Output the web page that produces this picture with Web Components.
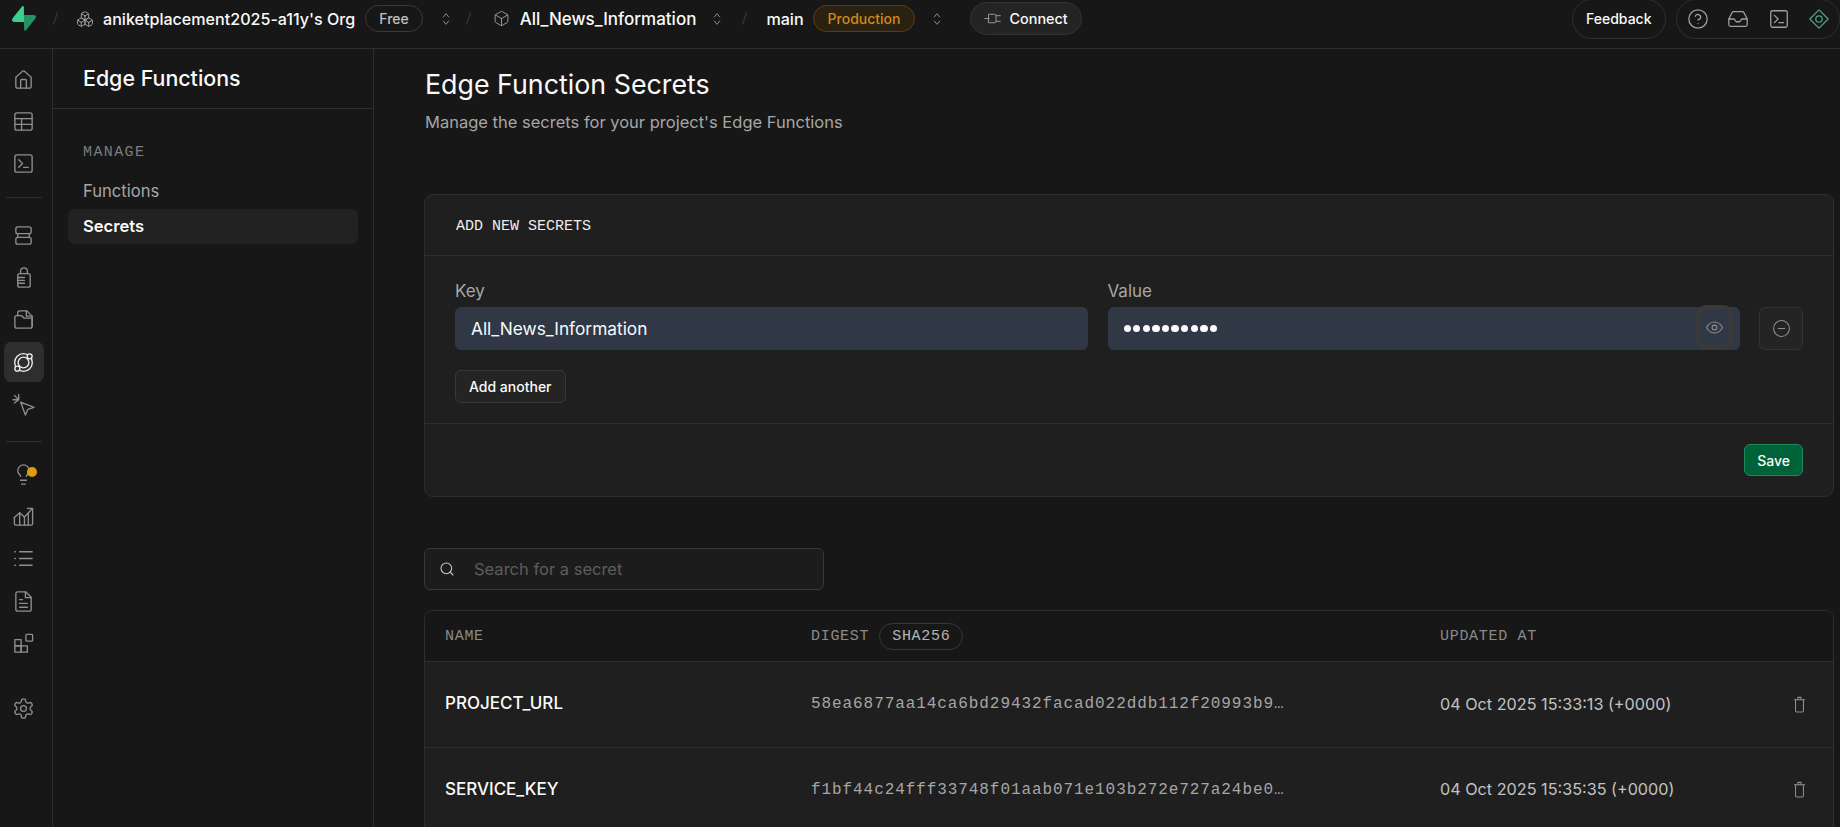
<!doctype html>
<html>
<head>
<meta charset="utf-8">
<title>Edge Function Secrets</title>
<style>
  html, body { margin: 0; height: 100%; background: #171717; overflow: hidden; }
  body { font-family: Inter, "Noto Sans", sans-serif; color: #fafafa; }
</style>
</head>
<body>
<app-shell>
  <app-topbar slot="top"></app-topbar>
  <app-rail slot="rail"></app-rail>
  <side-menu slot="menu" title="Edge Functions" group="MANAGE">
    <menu-link>Functions</menu-link>
    <menu-link active>Secrets</menu-link>
  </side-menu>
  <secrets-page slot="main"></secrets-page>
</app-shell>

<script>
const ICONS = {
  home: '<path d="M15 21v-8a1 1 0 0 0-1-1h-4a1 1 0 0 0-1 1v8"/><path d="M4 10.5a2 2 0 0 1 .7-1.5l6-5.4a2 2 0 0 1 2.6 0l6 5.4a2 2 0 0 1 .7 1.5V19a2 2 0 0 1-2 2H6a2 2 0 0 1-2-2z"/>',
  table: '<rect x="3" y="3" width="18" height="18" rx="2"/><path d="M3 9h18M3 15h18M10 9v12"/>',
  terminal: '<rect x="3" y="3" width="18" height="18" rx="2"/><path d="m7 8 4 4-4 4M12 16h5"/>',
  database: '<rect x="4" y="3" width="16" height="7" rx="2"/><rect x="4" y="14" width="16" height="7" rx="2"/><path d="M6 10v4M18 10v4"/>',
  auth: '<path d="M9 8V5.5a3.5 3.5 0 0 1 7 0V8"/><rect x="6" y="8" width="13" height="14" rx="2"/><path d="M6 12h7M6 15h7M6 18h7"/>',
  storage: '<path d="M6 8V5a2 2 0 0 1 2-2h7.5L21 8.5V19"/><path d="M15 3v5.5h6"/><path d="M3 10a2 2 0 0 1 2-2h5l2.5 2.5H21V19a2 2 0 0 1-2 2H5a2 2 0 0 1-2-2z"/>',
  functions: '<circle cx="12" cy="12" r="9.2"/><circle cx="12" cy="12" r="5.6"/><circle cx="18.4" cy="5.6" r="2.6" fill="#2e2e2e"/><circle cx="5.6" cy="18.4" r="2.6" fill="#2e2e2e"/>',
  realtime: '<path d="M9 9.5 23 15l-6.5 2-2.5 6z"/><path d="M7 1.5V7M1 7h6M2.5 2.5 7 7M7 7l-4.5 3.5"/>',
  bulb: '<path d="M15 14c.2-1 .7-1.7 1.5-2.5 1-.9 1.5-2.2 1.5-3.5A6 6 0 0 0 6 8c0 1 .2 2.2 1.5 3.5.7.7 1.3 1.5 1.5 2.5"/><path d="M9 18h6M10 22h4"/>',
  reports: '<path d="M2.5 13 8 8l5 4.5L21 4"/><path d="M16 3.5h5.5V9"/><path d="M2.5 13v6.5A1.5 1.5 0 0 0 4 21h16a1.5 1.5 0 0 0 1.5-1.5V9"/><path d="M8 8v13M13 12.5V21M17 8.5V21"/>',
  logs: '<path d="M8 5h13M8 12h13M8 19h13M3 5h.5M3 12h.5M3 19h.5"/>',
  file: '<path d="M14.5 2H6a2 2 0 0 0-2 2v16a2 2 0 0 0 2 2h12a2 2 0 0 0 2-2V7.5z"/><path d="M14 2v6h6M8 10h3M8 14h8M8 18h8"/>',
  extensions: '<rect x="3" y="8" width="6.5" height="6.5"/><rect x="3" y="14.5" width="6.5" height="6.5"/><rect x="9.5" y="14.5" width="6.5" height="6.5"/><rect x="14.5" y="2.5" width="7" height="7" rx="1"/>',
  settings: '<path d="M12.22 2h-.44a2 2 0 0 0-2 2v.18a2 2 0 0 1-1 1.73l-.43.25a2 2 0 0 1-2 0l-.15-.08a2 2 0 0 0-2.73.73l-.22.38a2 2 0 0 0 .73 2.73l.15.1a2 2 0 0 1 1 1.72v.51a2 2 0 0 1-1 1.74l-.15.09a2 2 0 0 0-.73 2.73l.22.38a2 2 0 0 0 2.73.73l.15-.08a2 2 0 0 1 2 0l.43.25a2 2 0 0 1 1 1.73V20a2 2 0 0 0 2 2h.44a2 2 0 0 0 2-2v-.18a2 2 0 0 1 1-1.73l.43-.25a2 2 0 0 1 2 0l.15.08a2 2 0 0 0 2.73-.73l.22-.39a2 2 0 0 0-.73-2.73l-.15-.08a2 2 0 0 1-1-1.74v-.5a2 2 0 0 1 1-1.74l.15-.09a2 2 0 0 0 .73-2.73l-.22-.38a2 2 0 0 0-2.73-.73l-.15.08a2 2 0 0 1-2 0l-.43-.25a2 2 0 0 1-1-1.73V4a2 2 0 0 0-2-2z"/><circle cx="12" cy="12" r="3"/>',
  help: '<circle cx="12" cy="12" r="10"/><path d="M9.1 9a3 3 0 0 1 5.8 1c0 2-3 3-3 3M12 17h.01"/>',
  inbox: '<path d="M22 12h-6l-2 3h-4l-2-3H2"/><path d="M5.45 5.11 2 12v6a2 2 0 0 0 2 2h16a2 2 0 0 0 2-2v-6l-3.45-6.89A2 2 0 0 0 16.76 4H7.24a2 2 0 0 0-1.79 1.11z"/>',
  advisor: '<path d="M12 2 22 12 12 22 2 12z"/><circle cx="12" cy="12" r="3.5"/>',
  eye: '<path d="M2 12s3.5-7 10-7 10 7 10 7-3.5 7-10 7-10-7-10-7z"/><circle cx="12" cy="12" r="3"/>',
  minus: '<circle cx="12" cy="12" r="10"/><path d="M8 12h8"/>',
  trash: '<path d="M5.5 6h13M10 6V3h4v3"/><path d="M7 6v14a1.5 1.5 0 0 0 1.5 1.5h7A1.5 1.5 0 0 0 17 20V6"/>',
  search: '<circle cx="11" cy="11" r="8"/><path d="m21 21-4.3-4.3"/>',
  updown: '<path d="m8 9 4-5 4 5M8 15l4 5 4-5"/>',
  box: '<path d="M21 8a2 2 0 0 0-1-1.73l-7-4a2 2 0 0 0-2 0l-7 4A2 2 0 0 0 3 8v8a2 2 0 0 0 1 1.73l7 4a2 2 0 0 0 2 0l7-4A2 2 0 0 0 21 16Z"/><path d="m3.3 7 8.7 5 8.7-5M12 22V12"/>',
  boxes: '<path d="M2.97 12.92A2 2 0 0 0 2 14.63v3.24a2 2 0 0 0 .97 1.71l3 1.8a2 2 0 0 0 2.06 0L12 19v-5.5l-5-3-4.03 2.42Z"/><path d="m7 16.5-4.74-2.85M7 16.5l5-3M7 16.5v5.17"/><path d="M12 13.5V19l3.97 2.38a2 2 0 0 0 2.06 0l3-1.8a2 2 0 0 0 .97-1.71v-3.24a2 2 0 0 0-.97-1.71L17 10.5l-5 3Z"/><path d="m17 16.5-5-3M17 16.5l4.74-2.85M17 16.5v5.17"/><path d="M7.97 4.42A2 2 0 0 0 7 6.13v4.37l5 3 5-3V6.13a2 2 0 0 0-.97-1.71l-3-1.8a2 2 0 0 0-2.06 0l-3 1.8Z"/><path d="M12 8 7.26 5.15M12 8l4.74-2.85M12 13.5V8"/>',
  plug: '<path d="M1 12h6M17 8h6M17 16h6"/><path d="M7 6h8a2 2 0 0 1 2 2v8a2 2 0 0 1-2 2H7z"/>'
}

// Stroke icon looked up by name, sized with the size attribute
class AppIcon extends HTMLElement {
  connectedCallback() {
    const size = this.getAttribute('size') || 20
    const weight = this.getAttribute('weight') || 1.5
    this.attachShadow({ mode: 'open' }).innerHTML = `
      <style>
        :host { display: inline-flex; flex: none; }
        svg { display: block; fill: none; stroke: currentColor; stroke-linecap: round; stroke-linejoin: round; }
      </style>
      <svg width="${size}" height="${size}" viewBox="0 0 24 24" stroke-width="${weight}">${ICONS[this.getAttribute('name')]}</svg>`
  }
}
customElements.define('app-icon', AppIcon)

class AppShell extends HTMLElement {
  constructor() {
    super()
    this.attachShadow({ mode: 'open' }).innerHTML = `
      <style>
        :host { display: flex; flex-direction: column; height: 100vh; overflow: hidden; }
        .below { flex: 1; display: flex; min-height: 0; }
        ::slotted([slot="main"]) { flex: 1; min-width: 0; }
      </style>
      <slot name="top"></slot>
      <div class="below">
        <slot name="rail"></slot>
        <slot name="menu"></slot>
        <slot name="main"></slot>
      </div>`
  }
}
customElements.define('app-shell', AppShell)

class StatusPill extends HTMLElement {
  constructor() {
    super()
    this.attachShadow({ mode: 'open' }).innerHTML = `
      <style>
        :host {
          display: inline-flex; align-items: center; height: 27px; box-sizing: border-box; padding: 0 13px;
          border: 1px solid #3a3a3a; border-radius: 14px; font-size: 14px; color: #c0c0c0;
        }
        :host([tone="warn"]) { border-color: #5c3d0e; background: #2b2110; color: #d08a18; padding: 0 14px; }
      </style>
      <slot></slot>`
  }
}
customElements.define('status-pill', StatusPill)

class AppTopbar extends HTMLElement {
  constructor() {
    super()
    this.attachShadow({ mode: 'open' }).innerHTML = `
      <style>
        :host {
          display: flex; align-items: center; height: 49px; flex: none; box-sizing: border-box;
          border-bottom: 1px solid #2e2e2e; padding: 0 0 11px 12px; font-size: 16.1px; font-weight: 500; color: #fafafa;
        }
        .slash { width: 1px; height: 13px; background: #3d3d3d; transform: rotate(18deg); flex: none; }
        app-icon { color: #a0a0a0; }
        .updown { color: #8a8a8a; }
        .project { font-size: 17px; }
        .connect {
          display: flex; align-items: center; gap: 8px; height: 33px; box-sizing: border-box; margin-left: 25px; padding: 0 13px;
          background: #242424; border: 1px solid #333; border-radius: 17px; font-size: 14.4px;
        }
        .feedback {
          display: flex; align-items: center; height: 40px; box-sizing: border-box; margin: 0 0 0 auto; padding: 0 13px;
          border: 1px solid #2e2e2e; border-radius: 20px; font-size: 14px;
        }
        .tools {
          display: flex; align-items: center; gap: 18.5px; height: 40px; box-sizing: border-box; margin: 0 0 0 10px; padding: 0 9px 0 10px;
          border: 1px solid #2e2e2e; border-radius: 20px;
        }
      </style>
      <svg width="24" height="25" viewBox="0 0 109 113">
        <path d="M63.7 110.3C60.8 113.9 55 111.9 55 107.3L54 40.1H99.2C107.4 40.1 112 49.5 106.9 55.9Z" fill="#249361"/>
        <path d="M45.3 2.1C48.2-1.5 54 .4 54 5L54.5 72.3H9.8C1.6 72.3-2.9 62.8 2.2 56.4Z" fill="#3ecf8e"/>
      </svg>
      <span class="slash" style="margin:0 20px 0 19px"></span>
      <app-icon name="boxes" size="18" weight="1.3"></app-icon>
      <span style="margin-left:9px">aniketplacement2025-a11y's Org</span>
      <status-pill style="margin-left:10px">Free</status-pill>
      <app-icon class="updown" name="updown" size="16" style="margin-left:15px"></app-icon>
      <span class="slash" style="margin:0 24px 0 14px"></span>
      <app-icon name="box" size="17" weight="1.3"></app-icon>
      <span class="project" style="margin-left:10px">All_News_Information</span>
      <app-icon class="updown" name="updown" size="16" style="margin-left:13px"></app-icon>
      <span class="slash" style="margin:0 21px 0 19px"></span>
      <span>main</span>
      <status-pill tone="warn" style="margin-left:9px">Production</status-pill>
      <app-icon class="updown" name="updown" size="16" style="margin-left:14px"></app-icon>
      <div class="connect"><app-icon name="plug" size="17" weight="1.3"></app-icon><span>Connect</span></div>
      <div class="feedback">Feedback</div>
      <div class="tools">
        <app-icon name="help" size="22" weight="1.4"></app-icon>
        <app-icon name="inbox" size="22" weight="1.4"></app-icon>
        <app-icon name="terminal" size="22" weight="1.4"></app-icon>
        <app-icon name="advisor" size="22" weight="1.4" style="color:#4fa17f"></app-icon>
      </div>`
  }
}
customElements.define('app-topbar', AppTopbar)

class RailItem extends HTMLElement {
  constructor() {
    super()
    const name = this.getAttribute('name')
    this.attachShadow({ mode: 'open' }).innerHTML = `
      <style>
        :host {
          display: flex; align-items: center; justify-content: center; position: relative;
          width: 40px; height: 40px; margin-bottom: 2.2px; border-radius: 7px; color: #8f8f8f;
        }
        :host([active]) { background: #2e2e2e; color: #ededed; }
        .dot { position: absolute; top: 12px; right: 7px; width: 10px; height: 10px; border-radius: 50%; background: #e09a10; }
      </style>
      <app-icon name="${name}" size="23" weight="1.4"></app-icon>
      ${this.hasAttribute('dot') ? '<span class="dot"></span>' : ''}`
  }
}
customElements.define('rail-item', RailItem)

class AppRail extends HTMLElement {
  constructor() {
    super()
    this.attachShadow({ mode: 'open' }).innerHTML = `
      <style>
        :host {
          display: flex; flex-direction: column; align-items: center; flex: none; width: 53px; box-sizing: border-box;
          padding: 10px 5px 0 0; border-right: 1px solid #2e2e2e;
        }
        hr { width: 36px; height: 1px; margin: 11px 0 13px; border: 0; background: #2e2e2e; }
      </style>
      <rail-item name="home"></rail-item>
      <rail-item name="table"></rail-item>
      <rail-item name="terminal"></rail-item>
      <hr style="margin-bottom:18px">
      <rail-item name="database"></rail-item>
      <rail-item name="auth"></rail-item>
      <rail-item name="storage"></rail-item>
      <rail-item name="functions" active></rail-item>
      <rail-item name="realtime"></rail-item>
      <hr style="margin-top:14px">
      <rail-item name="bulb" dot></rail-item>
      <rail-item name="reports"></rail-item>
      <rail-item name="logs"></rail-item>
      <rail-item name="file"></rail-item>
      <rail-item name="extensions" style="margin-bottom:25px"></rail-item>
      <rail-item name="settings"></rail-item>`
  }
}
customElements.define('app-rail', AppRail)

class MenuLink extends HTMLElement {
  constructor() {
    super()
    this.attachShadow({ mode: 'open' }).innerHTML = `
      <style>
        :host {
          display: flex; align-items: center; height: 35px; box-sizing: border-box; padding: 0 0 2px 15px; border-radius: 7px;
          font-size: 16.6px; color: #a6a6a6;
        }
        :host([active]) { background: #222; color: #fafafa; font-weight: 600; }
      </style>
      <slot></slot>`
  }
}
customElements.define('menu-link', MenuLink)

class SideMenu extends HTMLElement {
  constructor() {
    super()
    this.attachShadow({ mode: 'open' }).innerHTML = `
      <style>
        :host { display: block; flex: none; width: 321px; box-sizing: border-box; border-right: 1px solid #2e2e2e; }
        header {
          display: flex; align-items: center; height: 60px; padding: 0 0 2px 30px; box-sizing: border-box;
          border-bottom: 1px solid #2e2e2e; font-size: 21.4px; font-weight: 500;
        }
        .group {
          margin: 35px 0 12px 30px; font: 15px/18px "Liberation Mono", monospace; letter-spacing: 1.4px; color: #7d7d7d;
        }
        .links { padding: 0 15px; }
      </style>
      <header>${this.getAttribute('title')}</header>
      <div class="group">${this.getAttribute('group')}</div>
      <div class="links"><slot></slot></div>`
  }
}
customElements.define('side-menu', SideMenu)

class FieldBox extends HTMLElement {
  constructor() {
    super()
    this.attachShadow({ mode: 'open' }).innerHTML = `
      <style>
        :host { display: block; flex: 1; min-width: 0; }
        label { display: block; height: 29px; font-size: 17px; line-height: 27px; color: #a6a6a6; }
        .input {
          display: flex; align-items: center; position: relative; height: 43px; box-sizing: border-box; padding-left: 16px;
          background: #303846; border-radius: 6px; font-size: 17.3px; color: #fafafa;
        }
      </style>
      <label>${this.getAttribute('label')}</label>
      <div class="input"><slot></slot></div>`
  }
}
customElements.define('field-box', FieldBox)

class AddSecretsCard extends HTMLElement {
  constructor() {
    super()
    this.attachShadow({ mode: 'open' }).innerHTML = `
      <style>
        :host {
          display: block; box-sizing: border-box; background: #1f1f1f; border: 1px solid #2e2e2e; border-radius: 9px;
        }
        .head {
          display: flex; align-items: center; height: 60px; box-sizing: border-box; padding: 2px 30px 0 31px;
          font: 15px "Liberation Mono", monospace; color: #ededed;
        }
        .rule { height: 1px; background: #2e2e2e; }
        .body { height: 168px; box-sizing: border-box; padding: 22px 30px 0; border-bottom: 1px solid #2e2e2e; }
        .row { display: flex; gap: 20px; align-items: flex-end; }
        .dots { display: flex; gap: 2.2px; }
        .dots i { width: 7.4px; height: 7.4px; border-radius: 50%; background: #fafafa; }
        .eye {
          position: absolute; right: 7px; top: -2px; width: 37px; height: 44px; box-sizing: border-box;
          display: flex; align-items: center; justify-content: center; color: #8f8f8f;
          border: 4px solid #3a3a3a; border-radius: 10px; background: #303846;
        }
        .minus {
          flex: none; display: flex; align-items: center; justify-content: center; width: 44px; height: 43px; margin-left: -1px;
          box-sizing: border-box; background: #242424; border: 1px solid #333; border-radius: 6px; color: #8f8f8f;
        }
        .add {
          display: inline-flex; align-items: center; height: 33px; box-sizing: border-box; margin-top: 20px; padding: 0 13px;
          background: #242424; border: 1px solid #383838; border-radius: 6px; font-size: 14px; font-weight: 500;
        }
        .foot { display: flex; justify-content: flex-end; align-items: center; height: 72px; padding: 0 30px; box-sizing: border-box; }
        .save {
          display: flex; align-items: center; height: 32px; box-sizing: border-box; padding: 0 12px;
          background: #006239; border: 1px solid #1f8a5c; border-radius: 6px; font-size: 14px; font-weight: 500;
        }
      </style>
      <div class="head">ADD NEW SECRETS</div>
      <div class="rule"></div>
      <div class="body">
        <div class="row">
          <field-box label="Key">All_News_Information</field-box>
          <field-box label="Value">
            <span class="dots" aria-label="hidden value">${'<i></i>'.repeat(10)}</span>
            <span class="eye"><app-icon name="eye" size="19" weight="1.3"></app-icon></span>
          </field-box>
          <div class="minus"><app-icon name="minus" size="19" weight="1.3"></app-icon></div>
        </div>
        <div class="add">Add another</div>
      </div>
      <div class="foot"><div class="save">Save</div></div>`
  }
}
customElements.define('add-secrets-card', AddSecretsCard)

class SecretSearch extends HTMLElement {
  constructor() {
    super()
    this.attachShadow({ mode: 'open' }).innerHTML = `
      <style>
        :host {
          display: flex; align-items: center; gap: 19px; width: 400px; height: 42px; box-sizing: border-box; padding: 0 0 1px 14px;
          background: #1c1c1c; border: 1px solid #383838; border-radius: 6px; font-size: 16.5px; color: #5c5c5c;
        }
        app-icon { color: #c8c8c8; }
      </style>
      <app-icon name="search" size="16" weight="1.6"></app-icon>
      <span>Search for a secret</span>`
  }
}
customElements.define('secret-search', SecretSearch)

const TABLE_COLUMNS = 'grid-template-columns: 366px 629px 1fr 62px;'

class SecretRow extends HTMLElement {
  constructor() {
    super()
    this.attachShadow({ mode: 'open' }).innerHTML = `
      <style>
        :host {
          display: grid; ${TABLE_COLUMNS} align-items: center; height: 85.6px; box-sizing: border-box;
          border-top: 1px solid #2e2e2e; background: #1f1f1f;
        }
        div { padding-left: 20px; }
        .name { font-size: 17px; font-weight: 500; color: #fafafa; padding-bottom: 2px; }
        .digest { font: 16px "Liberation Mono", monospace; letter-spacing: .92px; color: #a6a6a6; white-space: nowrap; }
        .date { font-size: 16.2px; color: #c2c2c2; white-space: nowrap; padding-bottom: 1px; }
        .del { color: #8f8f8f; display: flex; padding-left: 19px; }
      </style>
      <div class="name">${this.getAttribute('name')}</div>
      <div class="digest">${this.getAttribute('digest')}</div>
      <div class="date">${this.getAttribute('date')}</div>
      <div class="del"><app-icon name="trash" size="19" weight="1.3"></app-icon></div>`
  }
}
customElements.define('secret-row', SecretRow)

class SecretsTable extends HTMLElement {
  constructor() {
    super()
    this.attachShadow({ mode: 'open' }).innerHTML = `
      <style>
        :host { display: block; border: 1px solid #2e2e2e; border-radius: 9px 9px 0 0; overflow: hidden; }
        .head {
          display: grid; ${TABLE_COLUMNS} align-items: center; height: 50px; background: #171717;
          font: 15px "Liberation Mono", monospace; letter-spacing: .7px; color: #8a8a8a;
        }
        .head > div { padding-left: 20px; display: flex; align-items: center; gap: 10px; }
        .hash {
          display: inline-flex; align-items: center; height: 27px; box-sizing: border-box; padding: 0 12px;
          border: 1px solid #383838; border-radius: 14px; color: #b4b4b4;
        }
      </style>
      <div class="head">
        <div>NAME</div>
        <div>DIGEST <span class="hash">SHA256</span></div>
        <div>UPDATED AT</div>
        <div></div>
      </div>
      <slot></slot>`
  }
}
customElements.define('secrets-table', SecretsTable)

class SecretsPage extends HTMLElement {
  constructor() {
    super()
    this.attachShadow({ mode: 'open' }).innerHTML = `
      <style>
        :host { display: block; box-sizing: border-box; padding: 18px 6px 0 50px; overflow: hidden; }
        h1 { margin: 0 0 0 1px; font-size: 26.8px; line-height: 34px; font-weight: 400; color: #fafafa; }
        p { margin: 10px 0 0 1px; font-size: 16.5px; line-height: 22px; color: #a6a6a6; }
        add-secrets-card { margin-top: 61px; }
        secret-search { margin-top: 51px; }
        secrets-table { margin-top: 20px; }
      </style>
      <h1>Edge Function Secrets</h1>
      <p>Manage the secrets for your project's Edge Functions</p>
      <add-secrets-card></add-secrets-card>
      <secret-search></secret-search>
      <secrets-table>
        <secret-row name="PROJECT_URL" digest="58ea6877aa14ca6bd29432facad022ddb112f20993b9…" date="04 Oct 2025 15:33:13 (+0000)"></secret-row>
        <secret-row name="SERVICE_KEY" digest="f1bf44c24fff33748f01aab071e103b272e727a24be0…" date="04 Oct 2025 15:35:35 (+0000)"></secret-row>
      </secrets-table>`
  }
}
customElements.define('secrets-page', SecretsPage)
</script>
</body>
</html>
